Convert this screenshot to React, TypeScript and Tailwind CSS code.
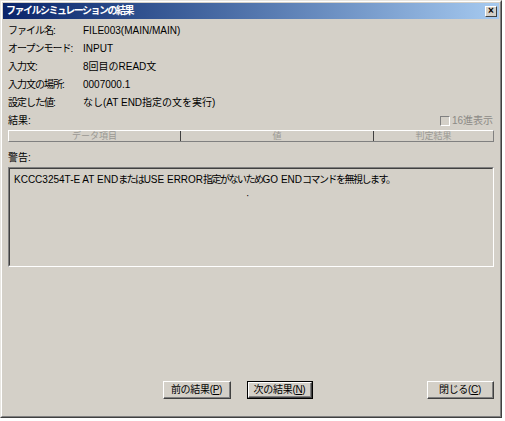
import React from 'react';

const font = { fontFamily: '"Liberation Sans", "Noto Sans CJK JP", sans-serif' };

const rows: [string, string][] = [
  ['ファイル名:', 'FILE003(MAIN/MAIN)'],
  ['オープンモード:', 'INPUT'],
  ['入力文:', '8回目のREAD文'],
  ['入力文の場所:', '0007000.1'],
  ['設定した値:', 'なし(AT END指定の文を実行)'],
];

const Btn: React.FC<{ label: string; k: string; def?: boolean; className?: string }> = ({ label, k, def, className }) => (
  <div className={`${def ? 'border border-black' : ''} ${className ?? ''}`}>
    <div className="h-full border-t border-l border-white border-r border-b border-r-[#404040] border-b-[#404040]">
      <div className="h-full flex items-center justify-center border-r border-b border-[#808080] text-[10px] text-black tracking-[-0.3px]">
        {label}(<span className="underline">{k}</span>)
      </div>
    </div>
  </div>
);

const App: React.FC = () => {
  return (
    <div className="w-[505px] h-[421px] bg-white" style={font}>
      <div className="w-[502px] h-[418px] bg-[#d4d0c8] border-t border-l border-[#e8e6e1] border-r border-b border-r-[#404040] border-b-[#404040]">
        <div className="h-full flex flex-col border-t border-l border-white border-r border-b border-r-[#808080] border-b-[#808080] px-[1px] pt-[1px]">
          {/* title bar */}
          <div className="h-[16px] flex items-center justify-between bg-gradient-to-r from-[#0a246a] to-[#a6caf0] pl-[3px] pr-[2px]">
            <span className="text-white text-[10px] font-bold leading-none tracking-[-1.5px]">ファイルシミュレーションの結果</span>
            <div className="w-[12px] h-[11px] bg-[#d4d0c8] border-t border-l border-white border-r border-b border-r-[#404040] border-b-[#404040] flex items-center justify-center text-[10px] font-bold leading-none text-black">
              ×
            </div>
          </div>

          <div className="flex-1 flex flex-col px-[5px] pt-[2px] text-[10px] text-black">
            {rows.map(([l, v]) => (
              <div key={l} className="h-[18px] flex items-center whitespace-nowrap">
                <span className="w-[75px] tracking-[-1px]">{l}</span>
                <span>{v}</span>
              </div>
            ))}

            <div className="h-[19px] flex items-center justify-between">
              <span>結果:</span>
              <div className="flex items-center gap-[2px] pr-[1px]">
                <div className="w-[10px] h-[10px] border-t border-l border-[#808080] border-r border-b border-r-white border-b-white" />
                <span className="text-[#8c8a86]">16進表示</span>
              </div>
            </div>

            <div className="h-[12px] flex border-t border-l border-white border-r border-b border-r-[#808080] border-b-[#808080] text-[9px] leading-none text-[#9a9893]">
              <div className="w-[172px] flex items-center justify-center border-r border-[#404040]">データ項目</div>
              <div className="w-[193px] flex items-center justify-center border-r border-[#404040]">値</div>
              <div className="flex-1 flex items-center justify-center">判定結果</div>
            </div>

            <div className="h-[25px] flex items-end pb-[2px]">
              <span>警告:</span>
            </div>

            <div className="h-[100px] border-t border-l border-[#808080] border-r border-b border-r-white border-b-white">
              <div className="h-full border-t border-l border-[#404040] border-r border-b border-r-[#d4d0c8] border-b-[#d4d0c8] px-[4px] pt-[3px]">
                <div className="whitespace-nowrap">
                  {'KCCC3254T-E AT END'}<span className="tracking-[-1.5px]">または</span>{'USE ERROR'}<span className="tracking-[-1.5px]">指定がないため</span>{'GO END'}<span className="tracking-[-1.5px]">コマンドを無視します。</span>
                </div>
                <div className="pl-[232px] pt-[4px] leading-none">·</div>
              </div>
            </div>

            <div className="flex-1" />

            <div className="h-[18px] flex mb-[17px]">
              <Btn label="前の結果" k="P" className="ml-[155px] w-[68px]" />
              <Btn label="次の結果" k="N" def className="ml-[16px] w-[66px]" />
              <Btn label="閉じる" k="C" className="ml-auto w-[67px]" />
            </div>
          </div>
        </div>
      </div>
    </div>
  );
};

export default App;
